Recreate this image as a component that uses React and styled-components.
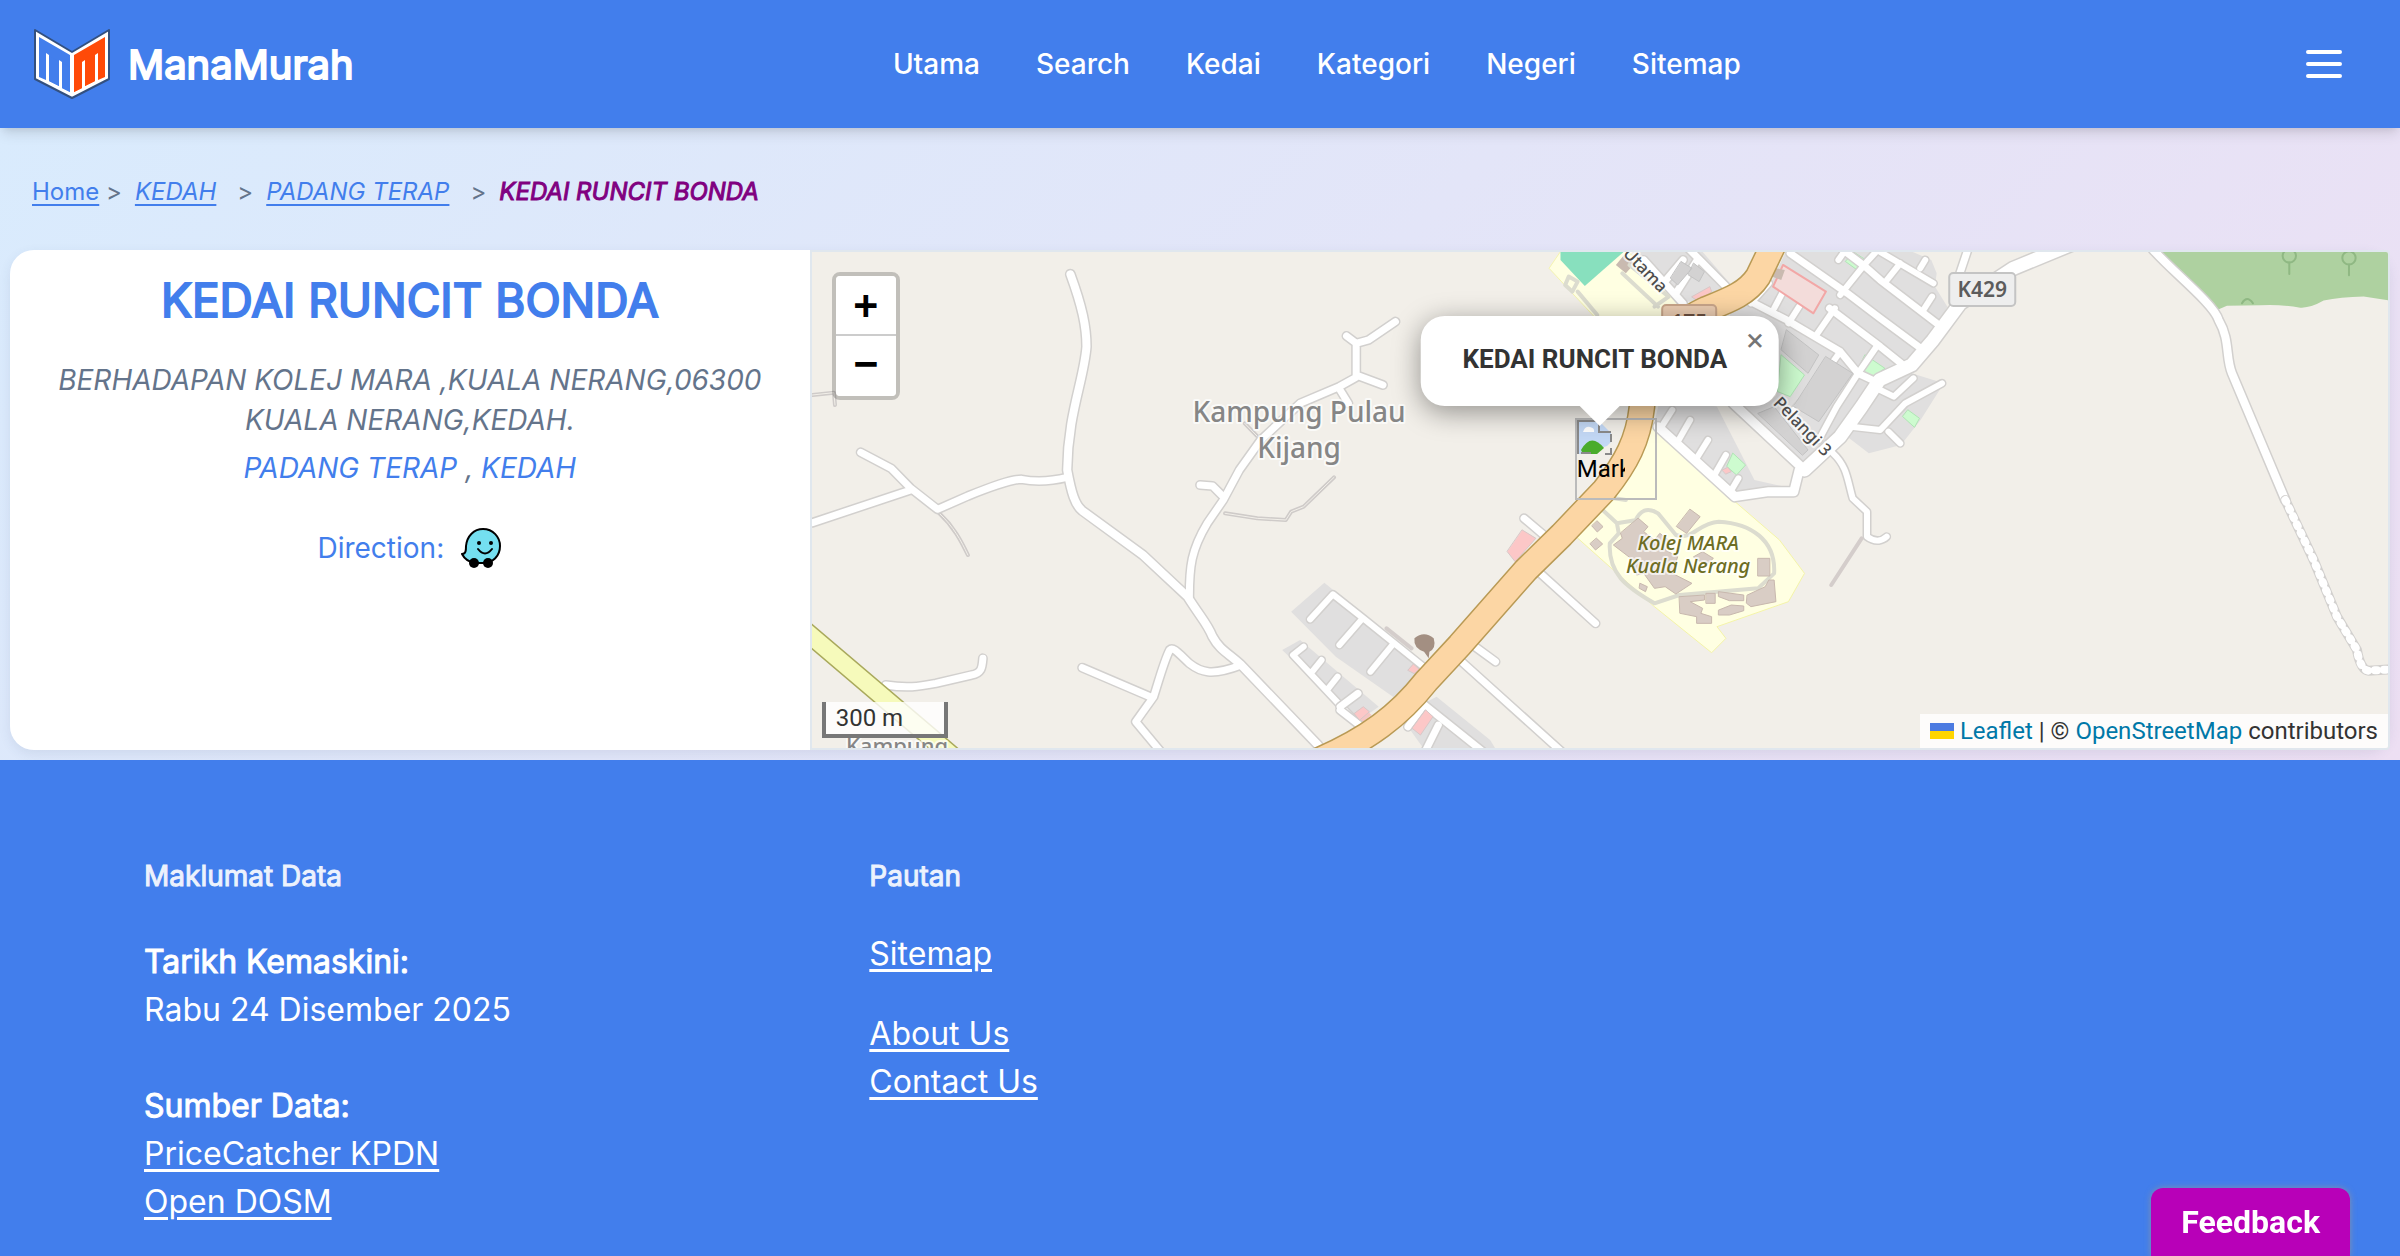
import React from 'react'
import styled, { createGlobalStyle, css } from 'styled-components'

const blue = '#427eec'
const inter = "Inter, 'Liberation Sans', sans-serif"
const roboto = "Roboto, 'Liberation Sans', sans-serif"

const navLinks = ['Utama', 'Search', 'Kedai', 'Kategori', 'Negeri', 'Sitemap']

// Every road is stroked twice: the casing first, then the surface
const westRoads = [
  { w: 8, d: 'M757 103C790 200 802 260 802 320C795 420 750 520 748 690C760 760 770 795 790 812L960 945L1085 1070C1120 1130 1140 1150 1155 1190C1175 1230 1200 1240 1235 1275L1450 1515' },
  { w: 7, d: 'M170 637L255 685L310 745L385 808L470 768C540 738 590 718 620 718C660 726 710 722 748 712M35 848L310 750' },
  { w: 7, d: 'M1090 1070C1090 980 1095 930 1140 850L1185 780L1230 690L1290 600L1400 490L1510 440L1557 412L1557 310L1530 288M1557 310L1592 300L1667 245M1557 405L1632 435M1512 450L1535 490' },
  { w: 7, d: 'M1120 735L1155 738L1185 770' },
  { w: 7, d: 'M240 1335C300 1345 330 1340 380 1330L480 1305C510 1300 510 1280 512 1255' },
  { w: 7, d: 'M790 1283L980 1370M1235 1275C1150 1310 1120 1295 1090 1270C1060 1240 1045 1220 1035 1230C1020 1260 1005 1320 990 1370L940 1445L1010 1535' },
  { w: 6, d: 'M1428 1138L1492 1063L1577 1135L1745 1280M1575 1135L1510 1215M1658 1215L1597 1295' },
  { w: 6, d: 'M1410 1220L1380 1245L1560 1450M1430 1300L1460 1260M1475 1350L1505 1310M1520 1395L1560 1360' },
]

const westTracks = 'M390 820C430 860 450 900 470 945M1190 820L1280 835L1360 840L1375 815L1410 800L1495 712M35 465L95 458L98 495M1245 550L1290 600'

const townRoads = [
  { w: 13, d: 'M2055 10L1885 85L1736 190L1660 300L1600 375L1510 420L1460 500L1400 590L1300 690' },
  { w: 9, d: 'M1100 490L1300 690M1285 690L1270 755L1200 755L1105 770L890 560' },
  { w: 6, d: 'M930 510L900 560M980 540L945 605M1030 600L995 660M1080 645L1045 710M1115 715L1090 760' },
  { w: 7, d: 'M1260 40L1420 160L1512 235L1632 330M1390 15L1470 80L1512 120L1670 250M1370 205L1512 320L1570 370' },
  { w: 7, d: 'M1150 185L1250 240L1400 335L1450 400L1510 430' },
  { w: 6, d: 'M1400 165L1475 65L1500 36M1330 290L1385 205M1450 400L1505 315M1255 250L1285 200M1215 205L1240 155M1150 190L1200 130M1395 60L1415 30' },
  { w: 6, d: 'M1400 335L1330 440L1270 510M1450 400L1390 500L1340 600' },
  { w: 6, d: 'M1512 36L1661 130M1531 120L1568 70M1624 85L1638 60M1633 210L1657 170' },
  { w: 6, d: 'M1512 450L1550 470L1605 415M1685 430L1582 490L1512 570L1430 560M1535 575L1568 610' },
  { w: 7, d: 'M1760 20L1735 100' },
  { w: 6, d: 'M1380 640C1420 680 1420 720 1435 775L1475 815L1475 890C1500 910 1520 900 1530 890' },
  { w: 7, d: 'M515 835L570 885M550 990L715 1150M365 1210L435 1265M330 1255L620 1535' },
  { w: 7, d: 'M225 1385L400 1535M190 1460L235 1395M240 1530L275 1455M0 1400L50 1360M0 1410L60 1460' },
  { w: 7, d: 'M970 20L1090 150M940 160L1000 60M905 130L960 60M850 60L960 190' },
]

const eastRoads = [
  { w: 8, d: 'M815 25C870 90 1000 190 1015 240C1050 300 1035 350 1055 400L1215 780' },
]

const trunkRoad = 'M1215 10L1170 110C1140 160 1090 180 1020 210C900 270 850 400 845 500C835 600 800 670 740 750L620 885L520 990L335 1215L240 1325C170 1420 80 1500 -80 1570'

function Roads({ roads }) {
  return (
    <>
      {roads.map(({ d, w }) => <path key={d} d={d} stroke="#d2d0ce" strokeWidth={w + 3} />)}
      {roads.map(({ d, w }) => <path key={d} d={d} stroke="#fff" strokeWidth={w} />)}
    </>
  )
}

function MapTiles() {
  return (
    <Tiles viewBox="0 0 1576 496" preserveAspectRatio="xMidYMid slice" aria-hidden="true">
      {/* West: villages */}
      <g transform="translate(-12 -12) scale(.35714 .33333)">
        <g className="area">
          <path fill="#e0dfdf" d="M1468 1028L1375 1115L1500 1250L1662 1372L1745 1290L1560 1110Z" />
          <path fill="#e0dfdf" d="M1400 1200L1350 1230L1560 1445L1620 1400Z" />
          <path fill="#f5c6c4" d="M1545 1425L1575 1400L1600 1425L1570 1450Z" />
        </g>
        <path stroke="#cfcbc9" strokeWidth="4" d={westTracks} />
        <path stroke="#f2efe9" strokeWidth="1" d={westTracks} />
        <Roads roads={westRoads} />
        <path stroke="#a9a95c" strokeWidth="20" d="M0 1159L440 1560" />
        <path stroke="#f6fabb" strokeWidth="17" d="M0 1159L440 1560" />
      </g>

      {/* Centre: town, school and campus */}
      <g transform="translate(528 -12) scale(.35714 .33333)">
        <g className="area">
          <path fill="#ffffe2" stroke="#f4f4b0" d="M620 30L585 85L720 240L940 240L960 180L800 30Z" />
          <path fill="#88e0be" d="M617 30L617 60L685 138L800 30Z" />
          <path fill="#e0dfdf" d="M820 30L1010 30L1095 135L985 185L945 185Z" />
          <path fill="#e0dfdf" d="M1250 30L1590 30L1655 60L1670 100L1665 140L1700 200L1600 400L1690 430L1625 540L1570 615L1480 640L1420 590L1310 700L1100 490L1090 200L1210 120Z" />
          <path fill="#e0dfdf" d="M895 480L1060 500L1290 745L1105 775L880 545Z" />
          <path fill="#f2efe9" d="M1050 490L1105 500L1290 695L1265 745L1160 720Z" />
          <path fill="#e0dfdf" d="M215 1400L270 1370L420 1500L440 1535L240 1535L190 1460Z" />
          <path fill="#ffffe2" stroke="#f4f4a8" d="M870 550L650 880L880 1100L1040 1238L1080 1195L1055 1160L1255 1085L1300 1000L1230 900L1100 780Z" />
          <path fill="#cdfbcf" stroke="#b0e5b5" d="M1440 38L1472 60L1450 92L1415 65ZM1235 345L1300 405L1260 470L1225 455ZM1470 345L1525 385L1490 412L1450 390ZM1100 640L1135 675L1110 705L1083 680ZM1590 510L1622 535L1608 562L1575 530Z" />
        </g>
        <Roads roads={townRoads} />
        <g className="area">
          <path fill="#d3d2d2" stroke="#c3c3c3" d="M1250 270L1340 345L1310 400L1235 330ZM1360 350L1435 400L1340 545L1270 500ZM1170 520L1215 500L1310 630L1295 645ZM955 65L985 85L945 135L925 115ZM990 70L1020 95L1005 125L975 105Z" />
          <path fill="#f3dcda" stroke="#f2a7a6" strokeWidth="2" d="M1240 75L1360 155L1325 220L1212 140Z" />
          <path fill="#fcc7c7" stroke="#d8c8c8" d="M510 870L548 895L490 965L468 935ZM985 170L1035 140L1040 155L1005 185ZM240 1410L260 1430L225 1485L202 1465ZM40 1420L65 1400L82 1415L55 1440ZM190 1290L205 1272L222 1288L208 1300ZM1070 690L1085 682L1095 695L1080 702Z" />
          <path fill="#c9bab0" d="M795 45L825 70L800 100L772 75ZM1220 85L1245 90L1235 120L1208 110Z" />
        </g>

        {/* Campus lanes */}
        <g stroke="#dcdccf" strokeWidth="4">
          <path d="M715 790L775 850L830 840M740 770L800 780M775 850L780 880L755 910C750 1000 800 1040 880 1090L950 1065L1170 1045L1215 1000C1220 900 1150 850 1060 845C1000 850 990 900 940 885L890 820C860 800 840 810 825 845" />
          <path d="M640 110L665 125L650 155L630 135ZM665 155L720 225M790 100L890 200M810 75L920 170L880 200" />
          <path stroke="#d4cdcb" d="M1460 895L1375 1035M130 1165L200 1225" />
        </g>
        <g className="area" fill="#d9cdc5" stroke="#c8b8ae">
          <path d="M980 808L1008 830L970 880L942 860ZM1170 955L1203 955L1203 1008L1170 1008ZM720 843L736 860L720 876L705 858ZM718 895L735 912L715 930L700 912Z" />
          <path d="M835 835L862 860L850 875L880 900L895 880L925 905L910 930L945 950L930 1000L985 1030L940 1062L910 1040L880 1045L850 1000L830 1005L820 960L765 915L790 895L785 880Z" />
          <path d="M950 1070L1020 1065L1020 1080L980 1085L1015 1105L1010 1120L1040 1130L1040 1150L998 1150L998 1130L952 1120ZM1025 1060L1050 1060L1050 1090L1025 1090ZM1060 1055L1130 1065L1130 1082L1090 1082L1060 1070ZM1060 1110L1095 1095L1130 1098L1130 1112L1090 1125L1060 1125ZM1140 1065L1190 1040L1200 1020L1215 1020L1220 1085L1150 1100L1138 1090Z" />
          <path d="M990 950L1015 935L1045 955L1025 975ZM840 1030L860 1040L855 1055L838 1045Z" />
        </g>
        <path className="area" fill="#a38f82" d="M208 1195Q235 1170 262 1195Q270 1225 250 1235L248 1255L235 1235Q205 1225 208 1195Z" />

        {/* Trunk road */}
        <path stroke="#b99a55" strokeWidth="27" d={trunkRoad} />
        <path stroke="#fcd6a4" strokeWidth="24" d={trunkRoad} />
      </g>

      {/* East: forest edge */}
      <g transform="translate(1068 -12) scale(.33333)">
        <path className="area" fill="#aed1a0" d="M820 30L1530 30L1530 182L1450 170Q1380 172 1330 182Q1290 205 1260 203Q1200 193 1140 196L1040 197L1005 212Z" />
        <g stroke="#8fb883" strokeWidth="2">
          <circle cx="1227" cy="48" r="20" /><path d="M1227 68V102" />
          <circle cx="1406" cy="54" r="20" /><path d="M1406 74V106" />
          <path d="M912 120Q930 110 940 136M1085 190Q1100 165 1118 190" />
        </g>
        <Roads roads={eastRoads} />
        <path stroke="#d2d0ce" strokeWidth="10" d="M1215 780L1300 960L1370 1130L1430 1230Q1440 1290 1465 1292L1530 1288" />
        <path stroke="#fff" strokeWidth="8" strokeDasharray="2 7" d="M1215 780L1300 960L1370 1130L1430 1230Q1440 1290 1465 1292L1530 1288" />
      </g>

      {/* Road shields */}
      <rect x="850" y="53" width="54" height="34" rx="4" fill="#ebcdb2" stroke="#c9a68a" strokeWidth="2" />
      <text x="877" y="78" fontSize="21" fontWeight="600" fill="#6b5040">175</text>
      <rect x="1137" y="21" width="66" height="33" rx="4" fill="#eee" stroke="#c4c4c4" strokeWidth="2" />
      <text x="1170" y="45" fontSize="21" fontWeight="600" fill="#5c5c5c">K429</text>

      {/* Place names */}
      <g fill="#868686" fontSize="28" fontWeight="500" className="halo">
        <text x="487" y="170">Kampung Pulau</text>
        <text x="487" y="206">Kijang</text>
        <text x="85" y="502" fontSize="22">Kampung</text>
      </g>
      <g fill="#6d6d24" fontSize="20" fontWeight="500" fontStyle="italic" className="halo">
        <text x="876" y="298">Kolej MARA</text>
        <text x="876" y="321">Kuala Nerang</text>
      </g>
      <g fill="#4d4d4d" fontSize="17" fontWeight="500" className="halo">
        <text transform="translate(981 173) rotate(46)">n Pelangi 3</text>
        <text transform="translate(829 22) rotate(46)">Utama</text>
      </g>
    </Tiles>
  )
}

function Logo() {
  return (
    <svg width="76" height="70" viewBox="0 0 76 70" aria-hidden="true">
      <path d="M1 1L38 23L75 1V50L38 69L1 50Z" fill="#fff" stroke="#33507f" strokeWidth="2" strokeLinejoin="round" />
      <path d="M5 8L36 26V63L28 59V33L25 31V57L15 52V26L12 24V51L5 48Z" fill={blue} />
      <path d="M15 27L25 32V57L15 52ZM28 34L36 38V63L28 59Z" fill={blue} />
      <path d="M71 8L40 26V63L48 59V33L51 31V57L61 52V26L64 24V51L71 48Z" fill="#ff4a08" />
      <path d="M51 29L61 24V52L51 57ZM40 30L48 34V59L40 63Z" fill="#ff4a08" />
    </svg>
  )
}

function WazeIcon() {
  return (
    <svg width="42" height="42" viewBox="0 0 42 42" aria-hidden="true">
      <path d="M23 2C33 2 40 10 40 19C40 29 33 36 23 36H15C9 35 4 31 2 27C6 27 6 23 6 19C7 9 14 2 23 2Z" fill="#74dff0" stroke="#000" strokeWidth="2" strokeLinejoin="round" />
      <circle cx="14" cy="36" r="5" />
      <circle cx="28" cy="36" r="5" />
      <circle cx="19" cy="16" r="2" />
      <circle cx="31" cy="16" r="2" />
      <path d="M18 22Q25 31 32 22" fill="none" stroke="#000" strokeWidth="2" strokeLinecap="round" />
    </svg>
  )
}

function BrokenImageIcon() {
  return (
    <svg width="36" height="36" viewBox="0 0 36 36" aria-hidden="true">
      <path d="M1 1H22L34 13V22L30 26L24 28L20 34H1Z" fill="#c3d8f5" />
      <path d="M4 30Q14 12 27 28L20 34H6Z" fill="#4aac2c" />
      <path d="M6 12Q8 6 13 7Q18 8 17 12Z" fill="#fff" />
      <path d="M1 34V1H22V12H34" fill="none" stroke="#8a8a8a" strokeWidth="2" />
      <path d="M34 14V22M34 28V34H28M4 33H14" fill="none" stroke="#8a8a8a" strokeWidth="2" />
    </svg>
  )
}

export default function App() {
  return (
    <Page>
      <GlobalStyle />
      <Header>
        <Brand href="#home"><Logo />ManaMurah</Brand>
        <Nav>
          {navLinks.map(label => <a key={label} href={`#${label.toLowerCase()}`}>{label}</a>)}
        </Nav>
        <MenuButton type="button" aria-label="Menu">
          <svg width="48" height="48" viewBox="0 0 24 24" fill="none" stroke="currentColor" strokeWidth="2" strokeLinecap="round">
            <path d="M4 6h16M4 12h16M4 18h16" />
          </svg>
        </MenuButton>
      </Header>

      <Main>
        <Breadcrumb aria-label="Breadcrumb">
          <span><a href="#home">Home</a> &gt;</span>
          <em><a href="#kedah">KEDAH</a></em>
          <Separator>&gt;</Separator>
          <em><a href="#padang-terap">PADANG TERAP</a></em>
          <Separator>&gt;</Separator>
          <Current>KEDAI RUNCIT BONDA</Current>
        </Breadcrumb>

        <Card>
          <Info>
            <Title>KEDAI RUNCIT BONDA</Title>
            <Address>BERHADAPAN KOLEJ MARA ,KUALA NERANG,06300 KUALA NERANG,KEDAH.</Address>
            <Region><a href="#padang-terap">PADANG TERAP</a> , <a href="#kedah">KEDAH</a></Region>
            <Direction href="#waze">Direction: <WazeIcon /></Direction>
          </Info>

          <MapPane>
            <MapTiles />
            <ZoomControl>
              <button type="button" aria-label="Zoom in">+</button>
              <button type="button" aria-label="Zoom out">−</button>
            </ZoomControl>
            <Marker>
              <BrokenImageIcon />
              <span>Mark</span>
            </Marker>
            <Popup>
              <strong>KEDAI RUNCIT BONDA</strong>
              <button type="button" aria-label="Close popup">×</button>
            </Popup>
            <Scale>300 m</Scale>
            <Attribution>
              <Flag />
              <a href="#leaflet">Leaflet</a> | © <a href="#osm">OpenStreetMap</a> contributors
            </Attribution>
          </MapPane>
        </Card>
      </Main>

      <Footer>
        <section>
          <FooterTitle>Maklumat Data</FooterTitle>
          <FooterGroup $gap="32px">
            <strong>Tarikh Kemaskini:</strong>
            <span>Rabu 24 Disember 2025</span>
          </FooterGroup>
          <FooterGroup $gap="48px">
            <strong>Sumber Data:</strong>
            <a href="#pricecatcher">PriceCatcher KPDN</a>
            <a href="#dosm">Open DOSM</a>
          </FooterGroup>
        </section>
        <section>
          <FooterTitle>Pautan</FooterTitle>
          <FooterGroup $gap="24px">
            <a href="#sitemap">Sitemap</a>
          </FooterGroup>
          <FooterGroup $gap="32px">
            <a href="#about">About Us</a>
            <a href="#contact">Contact Us</a>
          </FooterGroup>
        </section>
      </Footer>
      <Feedback type="button">Feedback</Feedback>
    </Page>
  )
}

// Thickened regular weight, keeps the narrow widths of the regular cut
const heavy = css`
  font-weight: 400;
  -webkit-text-stroke: 1px currentColor;
`

const GlobalStyle = createGlobalStyle`
  * {
    box-sizing: border-box;
  }

  body {
    margin: 0;
    font-family: ${inter};
    background: ${blue};
  }

  h1, h2, p {
    margin: 0;
  }
`

const Page = styled.div`
  min-height: 100vh;
  display: flex;
  flex-direction: column;
`

const Header = styled.header`
  position: relative;
  z-index: 10;
  height: 128px;
  padding: 0 32px;
  display: flex;
  align-items: center;
  justify-content: space-between;
  color: #fff;
  background: ${blue};
  box-shadow: 0 8px 12px -2px rgba(0, 0, 0, 0.1), 0 4px 8px -4px rgba(0, 0, 0, 0.1);
`

const Brand = styled.a`
  display: flex;
  align-items: center;
  gap: 18px;
  padding-left: 2px;
  font-size: 40px;
  ${heavy}
  -webkit-text-stroke-width: 2px;
  color: inherit;
  text-decoration: none;
`

const Nav = styled.nav`
  display: flex;
  gap: 56px;
  font-size: 28px;
  font-weight: 500;
  line-height: 40px;

  a {
    color: inherit;
    text-decoration: none;
  }
`

const MenuButton = styled.button`
  padding: 20px;
  border: 0;
  color: inherit;
  background: none;
  cursor: pointer;

  svg {
    display: block;
  }
`

const Main = styled.main`
  padding: 48px 10px 10px;
  background: linear-gradient(135deg, #d9ebfd, #eddff3);
`

const Breadcrumb = styled.nav`
  display: flex;
  align-items: center;
  padding: 0 22px;
  margin-bottom: 42px;
  font-size: 24px;
  line-height: 32px;
  color: #64748b;

  a {
    color: ${blue};
    text-underline-offset: 4px;
  }

  em {
    margin-left: 13px;
  }
`

const Separator = styled.span`
  margin-left: 21px;
`

const Current = styled.em`
  ${heavy}
  color: #800080;
`

const Card = styled.div`
  display: flex;
  min-height: 500px;
  border-radius: 24px;
  box-shadow: 0 4px 12px rgba(60, 80, 120, 0.1);
`

const Info = styled.section`
  width: 33.6%;
  padding: 18px 32px;
  display: flex;
  flex-direction: column;
  align-items: center;
  border-radius: 24px 0 0 24px;
  background: #fff;
  text-align: center;
  font-size: 28px;
  line-height: 40px;
  color: #64748b;

  a {
    color: ${blue};
    text-decoration: none;
  }
`

const Title = styled.h1`
  margin-bottom: 28px;
  font-size: 46px;
  line-height: 64px;
  ${heavy}
  -webkit-text-stroke-width: 2px;
  color: ${blue};
`

const Address = styled.p`
  font-style: italic;
`

const Region = styled.p`
  margin-top: 8px;
  font-style: italic;
`

const Direction = styled.a`
  display: flex;
  align-items: center;
  gap: 16px;
  margin-top: 39px;
`

const MapPane = styled.section`
  position: relative;
  flex: 1;
  overflow: hidden;
  border: 2px solid #e0e7ee;
  border-radius: 0 4px 4px 0;
  background: #f2efe9;
  font-family: ${roboto};
  font-size: 24px;
  color: #333;
`

const Tiles = styled.svg`
  position: absolute;
  inset: 0;
  width: 100%;
  height: 100%;
  font-family: 'Noto Sans', 'Open Sans', sans-serif;

  path, circle {
    fill: none;
    stroke-linecap: round;
    stroke-linejoin: round;
    vector-effect: non-scaling-stroke;
  }

  .area, .area path {
    fill: revert-layer;
  }

  text {
    text-anchor: middle;
  }

  .halo text {
    paint-order: stroke;
    stroke: rgba(255, 255, 255, 0.7);
    stroke-width: 4px;
    stroke-linejoin: round;
  }
`

const ZoomControl = styled.div`
  position: absolute;
  top: 20px;
  left: 20px;
  display: flex;
  flex-direction: column;
  border: 4px solid rgba(0, 0, 0, 0.2);
  border-radius: 8px;
  background-clip: padding-box;

  button {
    width: 60px;
    height: 60px;
    padding: 0 0 6px;
    border: 0;
    border-radius: 0 0 4px 4px;
    background: #fff;
    font: bold 40px 'DejaVu Sans Mono', monospace;
    color: #000;
    cursor: pointer;
  }

  button:first-child {
    padding-bottom: 0;
    border-bottom: 2px solid #ccc;
    border-radius: 4px 4px 0 0;
  }
`

const Marker = styled.div`
  position: absolute;
  top: 166px;
  left: calc(50% - 25px);
  width: 82px;
  height: 82px;
  border: 2px solid #bbb;
  color: #000;
  line-height: 26px;

  svg {
    display: block;
  }

  span {
    display: block;
    width: 48px;
    overflow: hidden;
  }
`

const Popup = styled.div`
  position: absolute;
  top: 64px;
  left: 50%;
  transform: translateX(-50%);
  display: flex;
  align-items: center;
  height: 90px;
  padding: 0 52px 4px 42px;
  border-radius: 24px;
  background: #fff;
  box-shadow: 0 6px 28px rgba(0, 0, 0, 0.4);
  font-size: 26px;
  white-space: nowrap;

  &::after {
    content: '';
    position: absolute;
    top: 100%;
    left: 50%;
    margin-left: -20px;
    border: 20px solid transparent;
    border-top-color: #fff;
    border-bottom: 0;
  }

  button {
    position: absolute;
    top: 0;
    right: 0;
    width: 48px;
    height: 48px;
    padding: 0;
    border: 0;
    background: none;
    font: 32px ${roboto};
    color: #757575;
    cursor: pointer;
  }
`

const Scale = styled.div`
  position: absolute;
  bottom: 10px;
  left: 10px;
  width: 126px;
  height: 36px;
  padding-left: 10px;
  border: 4px solid #777;
  border-top: 0;
  background: rgba(255, 255, 255, 0.8);
  line-height: 32px;
`

const Attribution = styled.div`
  position: absolute;
  right: 0;
  bottom: 0;
  padding: 0 10px;
  background: rgba(255, 255, 255, 0.8);
  line-height: 34px;
  white-space: nowrap;

  a {
    color: #0078a8;
    text-decoration: none;
  }
`

const Flag = styled.span`
  display: inline-block;
  width: 24px;
  height: 16px;
  margin-right: 6px;
  background: linear-gradient(#4c7be1 50%, #ffd500 50%);
`

const Footer = styled.footer`
  flex: 1;
  display: grid;
  grid-template-columns: repeat(3, 1fr);
  gap: 64px;
  padding: 96px 144px 20px;
  color: #fff;
  background: ${blue};
`

const FooterTitle = styled.h2`
  padding-bottom: 10px;
  font-size: 28px;
  line-height: 40px;
  ${heavy}
  opacity: 0.9;
`

const FooterGroup = styled.div`
  display: flex;
  flex-direction: column;
  align-items: flex-start;
  margin-top: ${({ $gap }) => $gap};
  font-size: 32px;
  line-height: 48px;

  strong {
    ${heavy}
  }

  a {
    color: inherit;
    text-underline-offset: 4px;
  }
`

const Feedback = styled.button`
  position: fixed;
  right: 50px;
  bottom: 0;
  height: 68px;
  padding: 0 30px;
  border: 0;
  border-radius: 12px 12px 0 0;
  background: #b800b8;
  box-shadow: 0 0 6px rgba(150, 150, 150, 0.8);
  font: bold 32px ${roboto};
  color: #fff;
  cursor: pointer;
`
